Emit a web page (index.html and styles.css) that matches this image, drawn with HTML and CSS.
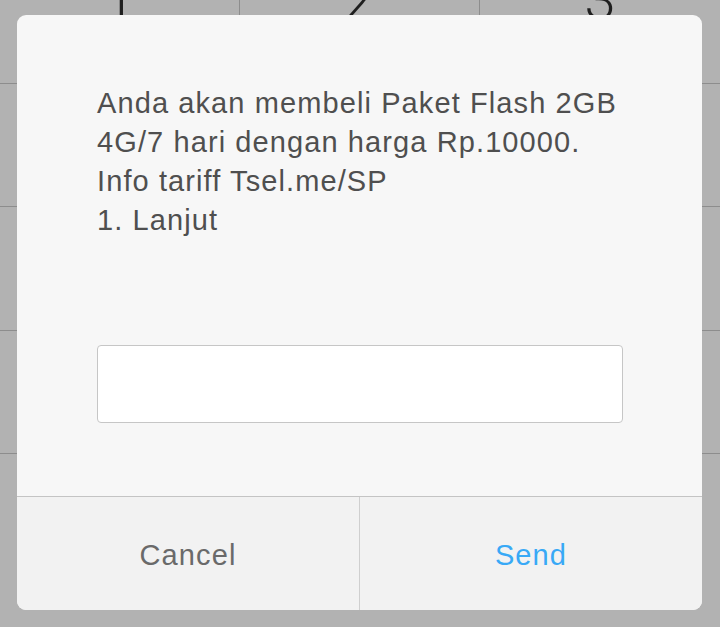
FILE: index.html
```html
<!DOCTYPE html>
<html>
<head>
<meta charset="utf-8">
<link rel="stylesheet" href="styles.css">
</head>
<body>
<div class="screen">
  <div class="pad">
    <div class="key"><span class="digit">1</span></div>
    <div class="key"><span class="digit">2</span></div>
    <div class="key"><span class="digit">3</span></div>
    <div class="key"></div>
    <div class="key"></div>
    <div class="key"></div>
    <div class="key"></div>
    <div class="key"></div>
    <div class="key"></div>
    <div class="key"></div>
    <div class="key"></div>
    <div class="key"></div>
  </div>
  <div class="dialog">
    <div class="body">
      <p class="message">Anda akan membeli Paket Flash 2GB<br>4G/7 hari dengan harga Rp.10000.<br>Info tariff Tsel.me/SP<br>1. Lanjut</p>
      <input class="reply" type="text">
    </div>
    <div class="actions">
      <button class="btn cancel">Cancel</button>
      <button class="btn send">Send</button>
    </div>
  </div>
</div>
</body>
</html>
```

FILE: styles.css
```css
* { box-sizing: border-box; }
html, body {
  margin: 0;
  padding: 0;
  width: 720px;
  height: 627px;
  overflow: hidden;
  background: #b2b2b2;
  font-family: "Liberation Sans", Arial, sans-serif;
}
.screen {
  position: relative;
  width: 720px;
  height: 627px;
  overflow: hidden;
}
.pad {
  display: grid;
  grid-template-columns: 240px 240px 240px;
  grid-template-rows: repeat(4, 123.5px);
  margin-top: -40px;
}
.key {
  border-bottom: 1px solid #8d8d8d;
  border-right: 1px solid #8d8d8d;
  display: flex;
  justify-content: center;
  padding-top: 12px;
}
.key:nth-child(3n) { border-right: none; }
.digit {
  font-family: Roboto, "Liberation Sans", sans-serif;
  font-weight: 300;
  font-size: 56px;
  line-height: 56px;
  color: #1f1f1f;
}
.dialog {
  position: absolute;
  left: 17px;
  top: 15px;
  width: 685px;
  height: 595px;
  background: #f7f7f7;
  border-radius: 9px;
  overflow: hidden;
  display: flex;
  flex-direction: column;
}
.body {
  flex: 1;
  padding: 69px 40px 0 80px;
}
.message {
  margin: 0;
  font-size: 29px;
  line-height: 39px;
  letter-spacing: 1.1px;
  color: #4f4f4f;
  white-space: nowrap;
}
.reply {
  display: block;
  margin-top: 105px;
  width: 526px;
  height: 78px;
  border: 1px solid #c6c6c6;
  border-radius: 4px;
  background: #ffffff;
  outline: none;
}
.actions {
  height: 114px;
  display: flex;
  border-top: 1px solid #c4c4c4;
  background: #f2f2f2;
}
.btn {
  flex: 1;
  border: none;
  background: transparent;
  font-family: "Liberation Sans", Arial, sans-serif;
  font-size: 29px;
  letter-spacing: 1.1px;
  padding: 4px 0 0 0;
  margin: 0;
}
.cancel {
  color: #6a6a6a;
  border-right: 1px solid #cfcfcf;
}
.send { color: #38a9f6; }
```
